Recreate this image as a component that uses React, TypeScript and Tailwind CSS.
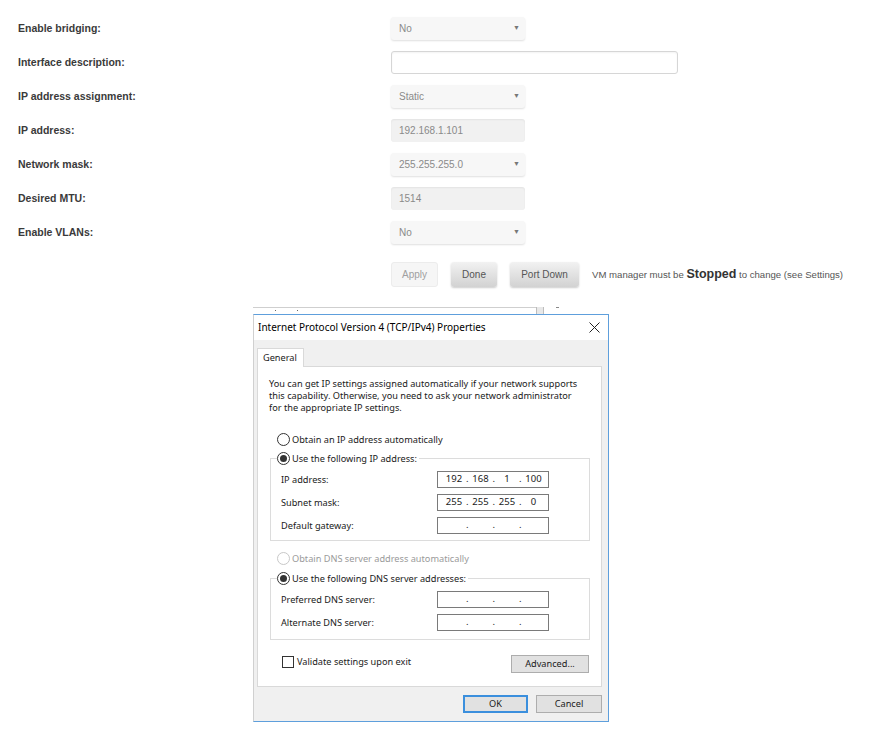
import { Fragment } from "react";

type Row =
  | { label: string; kind: "select"; value: string }
  | { label: string; kind: "readonly"; value: string }
  | { label: string; kind: "text" };

const formRows: Row[] = [
  { label: "Enable bridging:", kind: "select", value: "No" },
  { label: "Interface description:", kind: "text" },
  { label: "IP address assignment:", kind: "select", value: "Static" },
  { label: "IP address:", kind: "readonly", value: "192.168.1.101" },
  { label: "Network mask:", kind: "select", value: "255.255.255.0" },
  { label: "Desired MTU:", kind: "readonly", value: "1514" },
  { label: "Enable VLANs:", kind: "select", value: "No" },
];

function SelectBox({ value }: { value: string }) {
  return (
    <div className="flex h-[23px] w-[134px] items-center justify-between rounded-[3px] bg-[#f7f7f7] pl-[8px] pr-[5px] text-[10px] text-[#8a8a8a] shadow-[0_1px_2px_rgba(0,0,0,0.13)]">
      <span>{value}</span>
      <span className="text-[7px] text-[#777]">▼</span>
    </div>
  );
}

function ReadonlyBox({ value }: { value: string }) {
  return (
    <div className="flex h-[23px] w-[134px] items-center rounded-[3px] bg-[#f1f1f1] pl-[8px] text-[10px] text-[#8a8a8a] shadow-[inset_0_1px_2px_rgba(0,0,0,0.06)]">
      {value}
    </div>
  );
}

function TextBox() {
  return (
    <div className="h-[23px] w-[287px] rounded-[3px] border border-[#d6d6d6] bg-white shadow-[inset_0_1px_2px_rgba(0,0,0,0.05)]" />
  );
}

function IpField({ parts }: { parts?: string[] }) {
  const segs = parts ?? ["", "", "", ""];
  return (
    <div className="flex h-[17px] w-[112px] items-center border border-[#7a7a7a] bg-white pl-[5px] text-[9.5px] text-[#1a1a1a]">
      {segs.map((v, i) => (
        <Fragment key={i}>
          {i > 0 && <span className="w-[4.5px] text-center">.</span>}
          <span className="w-[22px] text-center">{v}</span>
        </Fragment>
      ))}
    </div>
  );
}

function Radio({ checked, disabled }: { checked?: boolean; disabled?: boolean }) {
  return (
    <span
      className={
        disabled
          ? "flex h-[13px] w-[13px] shrink-0 items-center justify-center rounded-full border border-[#c8c8c8] bg-white"
          : "flex h-[13px] w-[13px] shrink-0 items-center justify-center rounded-full border border-[#333] bg-white"
      }
    >
      {checked && <span className="h-[7px] w-[7px] rounded-full bg-[#333]" />}
    </span>
  );
}

function WinButton({ children, primary, width }: { children: string; primary?: boolean; width: string }) {
  return (
    <div
      className={
        primary
          ? `flex h-[18px] ${width} items-center justify-center border-2 border-[#3b8fdd] bg-[#e1e1e1]`
          : `flex h-[18px] ${width} items-center justify-center border border-[#adadad] bg-[#e1e1e1]`
      }
    >
      {children}
    </div>
  );
}

function AddressRow({ label, parts }: { label: string; parts?: string[] }) {
  return (
    <div className="flex items-center">
      <span className="w-[156px]">{label}</span>
      <IpField parts={parts} />
    </div>
  );
}

export default function App() {
  return (
    <div className="min-h-[750px] w-[878px] bg-white">
      {/* interface settings form */}
      <div className="flex flex-col gap-[11px] pl-[18px] pt-[17px] font-['Liberation_Sans',Arial,sans-serif]">
        {formRows.map((row) => (
          <div key={row.label} className="flex h-[23px] items-center">
            <span className="w-[373px] text-[10.5px] font-bold text-[#3a3a3a]">{row.label}</span>
            {row.kind === "select" && <SelectBox value={row.value} />}
            {row.kind === "readonly" && <ReadonlyBox value={row.value} />}
            {row.kind === "text" && <TextBox />}
          </div>
        ))}

        <div className="mt-[7px] flex h-[25px] items-center gap-[13px] pl-[373px] text-[10px]">
          <div className="flex h-[25px] w-[47px] items-center justify-center rounded-[3px] border border-[#ececec] bg-[#f6f6f6] text-[#a0a0a0]">
            Apply
          </div>
          <div className="flex h-[25px] w-[46px] items-center justify-center rounded-[3px] bg-gradient-to-b from-[#f2f2f2] to-[#d2d2d2] text-[#555] shadow-[0_1px_2px_rgba(0,0,0,0.2)]">
            Done
          </div>
          <div className="flex h-[25px] w-[69px] items-center justify-center rounded-[3px] bg-gradient-to-b from-[#f2f2f2] to-[#d2d2d2] text-[#555] shadow-[0_1px_2px_rgba(0,0,0,0.2)]">
            Port Down
          </div>
          <span className="text-[9.6px] text-[#555]">
            VM manager must be <span className="text-[12.5px] font-bold text-[#333]">Stopped</span> to change (see
            Settings)
          </span>
        </div>
      </div>

      {/* TCP/IPv4 properties dialog */}
      <div className="ml-[253px] mt-[20px] w-[356px] font-['Noto_Sans','Open_Sans',sans-serif] text-[9.2px] text-[#1a1a1a]">
        {/* edge of the window underneath */}
        <div className="flex h-[7px]">
          <div className="relative w-[283px] border-t border-[#cfcfcf] bg-white">
            <span className="absolute left-[22px] top-[2px] h-[1px] w-[1px] bg-[#666]" />
            <span className="absolute left-[44px] top-[2px] h-[1px] w-[1px] bg-[#666]" />
          </div>
          <div className="w-[8px] border-l border-r border-[#bdbdbd] bg-[#e8e8e8]" />
          <div className="relative flex-1 bg-white">
            <span className="absolute left-[12px] top-0 h-[1px] w-[3px] bg-[#888]" />
          </div>
        </div>

        <div className="border border-[#5e9fdc] border-l-[#d0d0d0] bg-[#f0f0f0]">
          <div className="flex h-[25px] items-center justify-between bg-white pl-[4px] pr-[8px]">
            <span className="text-[10px] text-black">Internet Protocol Version 4 (TCP/IPv4) Properties</span>
            <svg width="11" height="11" viewBox="0 0 11 11" fill="none">
              <path d="M0.5 0.5 L10.5 10.5 M10.5 0.5 L0.5 10.5" stroke="#222" strokeWidth="1" />
            </svg>
          </div>

          <div className="pl-[3px] pr-[6px] pt-[8px]">
            <div className="relative z-10 -mb-px flex h-[19px] w-[47px] items-center border border-b-0 border-[#d9d9d9] bg-white pl-[5px]">
              General
            </div>
            <div className="h-[321px] w-[345px] border border-[#d9d9d9] bg-white pl-[11px] pt-[11px]">
              <div className="flex flex-col whitespace-nowrap">
                <span className="h-[12px] leading-[12px]">
                  You can get IP settings assigned automatically if your network supports
                </span>
                <span className="h-[12px] leading-[12px]">
                  this capability. Otherwise, you need to ask your network administrator
                </span>
                <span className="h-[12px] leading-[12px]">for the appropriate IP settings.</span>
              </div>

              <div className="ml-[8px] mt-[19px] flex h-[13px] items-center gap-[2px]">
                <Radio />
                <span>Obtain an IP address automatically</span>
              </div>

              <fieldset className="ml-[1px] mt-[6px] w-[320px] border border-[#dcdcdc] pb-[6px] pl-[10px]">
                <legend className="ml-[-4px] flex h-[13px] items-center gap-[2px] pr-[2px]">
                  <Radio checked />
                  <span>Use the following IP address:</span>
                </legend>
                <div className="flex flex-col gap-[6px] pt-[6px]">
                  <AddressRow label="IP address:" parts={["192", "168", "1", "100"]} />
                  <AddressRow label="Subnet mask:" parts={["255", "255", "255", "0"]} />
                  <AddressRow label="Default gateway:" />
                </div>
              </fieldset>

              <div className="ml-[8px] mt-[11px] flex h-[13px] items-center gap-[2px] text-[#9a9a9a]">
                <Radio disabled />
                <span>Obtain DNS server address automatically</span>
              </div>

              <fieldset className="ml-[1px] mt-[7px] w-[320px] border border-[#dcdcdc] pb-[8px] pl-[10px]">
                <legend className="ml-[-4px] flex h-[13px] items-center gap-[2px] pr-[2px]">
                  <Radio checked />
                  <span>Use the following DNS server addresses:</span>
                </legend>
                <div className="flex flex-col gap-[6px] pt-[6px]">
                  <AddressRow label="Preferred DNS server:" />
                  <AddressRow label="Alternate DNS server:" />
                </div>
              </fieldset>

              <div className="mt-[15px] flex w-[320px] items-start justify-between">
                <div className="ml-[13px] flex items-center gap-[3px]">
                  <span className="h-[12px] w-[12px] border border-[#333] bg-white" />
                  <span>Validate settings upon exit</span>
                </div>
                <WinButton width="w-[78px]">Advanced...</WinButton>
              </div>
            </div>
          </div>

          <div className="flex justify-end gap-[8px] pb-[8px] pr-[6px] pt-[8px]">
            <WinButton primary width="w-[65px]">
              OK
            </WinButton>
            <WinButton width="w-[66px]">Cancel</WinButton>
          </div>
        </div>
      </div>
    </div>
  );
}
